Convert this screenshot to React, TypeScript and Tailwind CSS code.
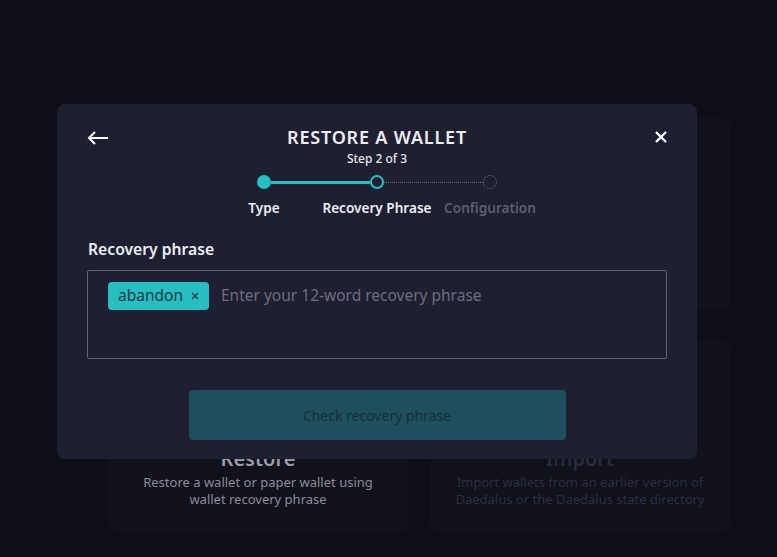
import React from "react";

const font = { fontFamily: '"Noto Sans", "Open Sans", sans-serif' };

function BackgroundCard({
  title,
  lines,
  dim,
}: {
  title: string;
  lines: string[];
  dim?: boolean;
}) {
  return (
    <div className="w-[300px] h-[192px] rounded-md bg-[#10111b] flex flex-col justify-end items-center pb-[24px]">
      <div
        className={`text-[20px] font-semibold leading-[26px] ${dim ? "text-[#2a2b40]" : "text-[#9a9bab]"}`}>
        {title}
      </div>
      <div
        className={`text-[13px] leading-[17px] text-center mt-[2px] ${dim ? "text-[#2c2d43]" : "text-[#8b8c9d]"}`}>
        {lines.map((l) => (
          <div key={l}>{l}</div>
        ))}
      </div>
    </div>
  );
}

export default function App() {
  return (
    <div
      className="relative w-[777px] h-[557px] overflow-hidden bg-[#0d0e18]"
      style={font}>
      {/* page behind the dialog */}
      <div className="grid grid-cols-[300px_300px] gap-x-[22px] gap-y-[30px] pl-[108px] pt-[118px]">
        <BackgroundCard title="Create" lines={["Create a new wallet"]} />
        <BackgroundCard title="Join" lines={["Join a shared wallet"]} dim />
        <BackgroundCard
          title="Restore"
          lines={["Restore a wallet or paper wallet using", "wallet recovery phrase"]}
        />
        <BackgroundCard
          title="Import"
          lines={[
            "Import wallets from an earlier version of",
            "Daedalus or the Daedalus state directory",
          ]}
          dim
        />
      </div>

      {/* dialog */}
      <div className="absolute left-[57px] top-[104px] w-[640px] rounded-lg bg-[#1e1f30] px-[30px] pt-[20px] pb-[19px]">
        <div className="grid grid-cols-[40px_1fr_40px] items-start">
          <div className="pt-[7px]">
            <svg width="22" height="14" viewBox="0 0 22 14" fill="none">
              <path d="M2 7H21" stroke="#fff" strokeWidth="2" />
              <path d="M8 1L2 7L8 13" stroke="#fff" strokeWidth="2" />
            </svg>
          </div>
          <div className="flex flex-col items-center">
            <div className="text-[18px] leading-[26px] font-semibold tracking-[0.8px] text-[#eceef4]">
              RESTORE A WALLET
            </div>
            <div className="mt-[1px] text-[12px] leading-[16px] font-medium text-[#e6e7ee]">
              Step 2 of 3
            </div>
          </div>
          <div className="flex justify-end pt-[7px]">
            <svg width="12" height="12" viewBox="0 0 12 12" fill="none">
              <path d="M1 1L11 11M11 1L1 11" stroke="#fff" strokeWidth="2.4" />
            </svg>
          </div>
        </div>

        {/* stepper */}
        <div className="mt-[8px] flex justify-center">
          <div className="flex items-center w-[240px]">
            <div className="w-[14px] h-[14px] rounded-full bg-[#26bfc1]" />
            <div className="flex-1 h-[3px] bg-[#26bfc1]" />
            <div className="w-[14px] h-[14px] rounded-full border-2 border-[#26bfc1] bg-[#1e1f30]" />
            <div className="flex-1 border-t border-dotted border-[#6b6c80]" />
            <div className="w-[14px] h-[14px] rounded-full border border-dotted border-[#6b6c80]" />
          </div>
        </div>
        <div className="mt-[10px] flex justify-center">
          <div className="grid grid-cols-3 w-[339px] text-[13.6px] leading-[18px] font-semibold text-center whitespace-nowrap">
            <span className="text-[#eceef4]">Type</span>
            <span className="text-[#eceef4]">Recovery Phrase</span>
            <span className="text-[#5c5e71]">Configuration</span>
          </div>
        </div>

        {/* recovery phrase field */}
        <div className="mt-[22px] text-[15.7px] leading-[20px] font-semibold text-[#eceef4] pl-[1px]">
          Recovery phrase
        </div>
        <div className="mt-[11px] h-[89px] border border-[#5f6073] rounded-[2px] px-[20px] pt-[11px]">
          <div className="flex items-center gap-[12px]">
            <div className="flex items-center h-[28px] rounded bg-[#26bec0] pl-[10px] pr-[10px] gap-[8px]">
              <span className="text-[15.5px] text-[#1d3a47]">abandon</span>
              <svg width="8" height="8" viewBox="0 0 8 8" fill="none">
                <path d="M1 1L7 7M7 1L1 7" stroke="#1d3a47" strokeWidth="1.2" />
              </svg>
            </div>
            <span className="text-[15.5px] text-[#6c6d81]">
              Enter your 12-word recovery phrase
            </span>
          </div>
        </div>

        <div className="mt-[31px] flex justify-center">
          <button className="w-[377px] h-[50px] rounded bg-[#1f4f5c] text-[14px] text-[#12303a]">
            Check recovery phrase
          </button>
        </div>
      </div>
    </div>
  );
}
